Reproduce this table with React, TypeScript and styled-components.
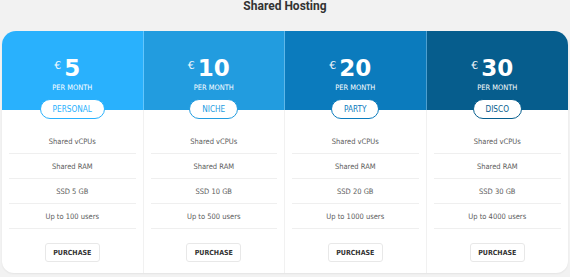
import React from "react";
import styled, { createGlobalStyle } from "styled-components";

const GlobalStyle = createGlobalStyle`
  html, body { margin: 0; padding: 0; background: #f2f2f2; }
  body { font-family: "DejaVu Sans Condensed", "DejaVu Sans", sans-serif; }
`;

const Page = styled.div`
  width: 570px;
  height: 277px;
  box-sizing: border-box;
  padding: 0 2px;
  overflow: hidden;
`;

const Title = styled.h2`
  margin: 0 0 18px;
  height: 13px;
  font-family: Roboto, "Liberation Sans", sans-serif;
  font-weight: 700;
  font-size: 12px;
  line-height: 13px;
  color: #333;
  text-align: center;
`;

const Card = styled.div`
  display: grid;
  grid-template-columns: repeat(4, 1fr);
  height: 242px;
  background: #fff;
  border-radius: 14px 14px 12px 12px;
  overflow: hidden;
  box-shadow: 0 1px 2px rgba(0, 0, 0, 0.06);
`;

const Column = styled.div`
  display: flex;
  flex-direction: column;
`;

const Header = styled.div<{ $bg: string; $last: boolean }>`
  position: relative;
  z-index: 1;
  flex: 0 0 79px;
  height: 79px;
  box-sizing: border-box;
  padding-top: 25px;
  display: flex;
  flex-direction: column;
  align-items: center;
  background: ${(p) => p.$bg};
  border-right: ${(p) => (p.$last ? "none" : "1px solid rgba(255,255,255,0.28)")};
  color: #fff;
  overflow: visible;
  & > * { flex-shrink: 0; }
`;

const Price = styled.div`
  position: relative;
  font-family: "DejaVu Sans", sans-serif;
  font-weight: 700;
  font-size: 23px;
  line-height: 24px;
  height: 24px;
`;

const Currency = styled.span`
  position: absolute;
  right: 100%;
  top: 3px;
  margin-right: 3px;
  font-family: "DejaVu Sans", sans-serif;
  font-weight: 400;
  font-size: 11px;
  line-height: 14px;
  opacity: 0.92;
`;

const PerMonth = styled.div`
  margin-top: 3px;
  font-size: 7.4px;
  line-height: 9px;
  text-transform: uppercase;
`;

const Badge = styled.div<{ $color: string }>`
  margin-top: 7px;
  height: 20px;
  box-sizing: border-box;
  padding: 0 12px;
  display: flex;
  align-items: center;
  background: #fff;
  border: 1.5px solid ${(p) => p.$color};
  border-radius: 10px;
  color: ${(p) => p.$color};
  font-size: 8.2px;
  text-transform: uppercase;
`;

const Body = styled.div<{ $last: boolean }>`
  flex: 1;
  display: flex;
  flex-direction: column;
  align-items: stretch;
  padding: 19px 7px 0;
  border-right: ${(p) => (p.$last ? "none" : "1px solid #f1f1f1")};
`;

const Feature = styled.div`
  height: 24px;
  border-bottom: 1px solid #efefef;
  display: flex;
  align-items: center;
  justify-content: center;
  font-size: 7.5px;
  color: #5c5c5c;
`;

const Purchase = styled.button`
  align-self: center;
  margin-top: 14px;
  width: 55px;
  height: 19px;
  padding: 0;
  background: #fff;
  border: 1px solid #e8e8e8;
  border-radius: 3px;
  font-family: "DejaVu Sans Condensed", "DejaVu Sans", sans-serif;
  font-weight: 700;
  font-size: 7px;
  color: #333;
  cursor: pointer;
`;

type Plan = {
  price: number;
  name: string;
  color: string;
  ssd: string;
  users: string;
};

const plans: Plan[] = [
  { price: 5, name: "Personal", color: "#29b1fd", ssd: "SSD 5 GB", users: "Up to 100 users" },
  { price: 10, name: "Niche", color: "#229cdf", ssd: "SSD 10 GB", users: "Up to 500 users" },
  { price: 20, name: "Party", color: "#0b7bbd", ssd: "SSD 20 GB", users: "Up to 1000 users" },
  { price: 30, name: "Disco", color: "#065d8d", ssd: "SSD 30 GB", users: "Up to 4000 users" },
];

export default function App() {
  return (
    <>
      <GlobalStyle />
      <Page>
        <Title>Shared Hosting</Title>
        <Card>
          {plans.map((p, i) => {
            const last = i === plans.length - 1;
            return (
              <Column key={p.name}>
                <Header $bg={p.color} $last={last}>
                  <Price>
                    <Currency>€</Currency>
                    {p.price}
                  </Price>
                  <PerMonth>per month</PerMonth>
                  <Badge $color={p.color}>{p.name}</Badge>
                </Header>
                <Body $last={last}>
                  <Feature>Shared vCPUs</Feature>
                  <Feature>Shared RAM</Feature>
                  <Feature>{p.ssd}</Feature>
                  <Feature>{p.users}</Feature>
                  <Purchase>PURCHASE</Purchase>
                </Body>
              </Column>
            );
          })}
        </Card>
      </Page>
    </>
  );
}
